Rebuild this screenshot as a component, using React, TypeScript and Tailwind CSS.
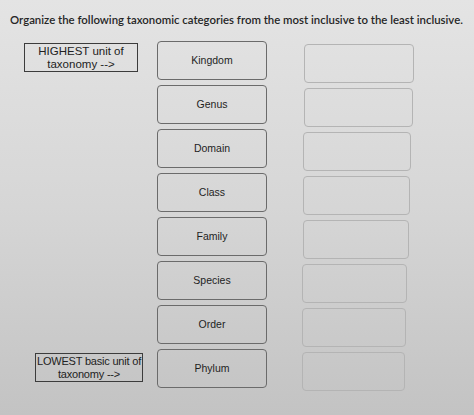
import React from "react";

const items = ["Kingdom", "Genus", "Domain", "Class", "Family", "Species", "Order", "Phylum"];

export default function App() {
  return (
    <div
      className="w-[474px] h-[415px] overflow-hidden bg-gradient-to-b from-[#e4e4e4] via-[#d6d6d6] to-[#c3c3c3] text-[#2b2b2b]"
      style={{ fontFamily: "Lato, 'Liberation Sans', Arial, sans-serif" }}
    >
      <p className="pt-[12px] pl-[10px] text-[11.4px] leading-[16px] font-semibold text-[#262626] whitespace-nowrap">
        Organize the following taxonomic categories from the most inclusive to the least inclusive.
      </p>

      <div className="mt-[13px] flex" style={{ fontFamily: "'Liberation Sans', Arial, sans-serif" }}>
        {/* row labels */}
        <div className="w-[157px] flex flex-col justify-between h-[346px]">
          <div className="ml-[24px] mt-[2px] w-[114px] h-[29px] border-[1.5px] border-[#3c3c3c] flex flex-col items-center justify-center text-[11.5px] leading-[13px] text-[#222]">
            <span>HIGHEST unit of</span>
            <span>taxonomy --&gt;</span>
          </div>
          <div className="ml-[35px] mb-[5px] w-[108px] h-[29px] border-[1.5px] border-[#3c3c3c] flex flex-col items-center justify-center text-[11px] leading-[13px] tracking-[-0.2px] text-[#222] whitespace-nowrap">
            <span>LOWEST basic unit of</span>
            <span>taxonomy --&gt;</span>
          </div>
        </div>

        {/* draggable choices */}
        <div className="w-[110px] flex flex-col gap-[5px]">
          {items.map((t) => (
            <div
              key={t}
              className="h-[39px] rounded-[4px] border-[1.5px] border-[#6b6b6b] flex items-center justify-center text-[10.5px] text-[#1e1e1e]"
            >
              {t}
            </div>
          ))}
        </div>

        {/* empty drop targets */}
        <div className="ml-[37px] mt-[3px] flex flex-col gap-[5px]">
          {items.map((t, i) => (
            <div
              key={t}
              className="h-[39px] rounded-[4px] border border-[#b4b4b4]"
              style={{ width: 110 - i, marginLeft: -Math.round(i * 0.3) }}
            />
          ))}
        </div>
      </div>
    </div>
  );
}
